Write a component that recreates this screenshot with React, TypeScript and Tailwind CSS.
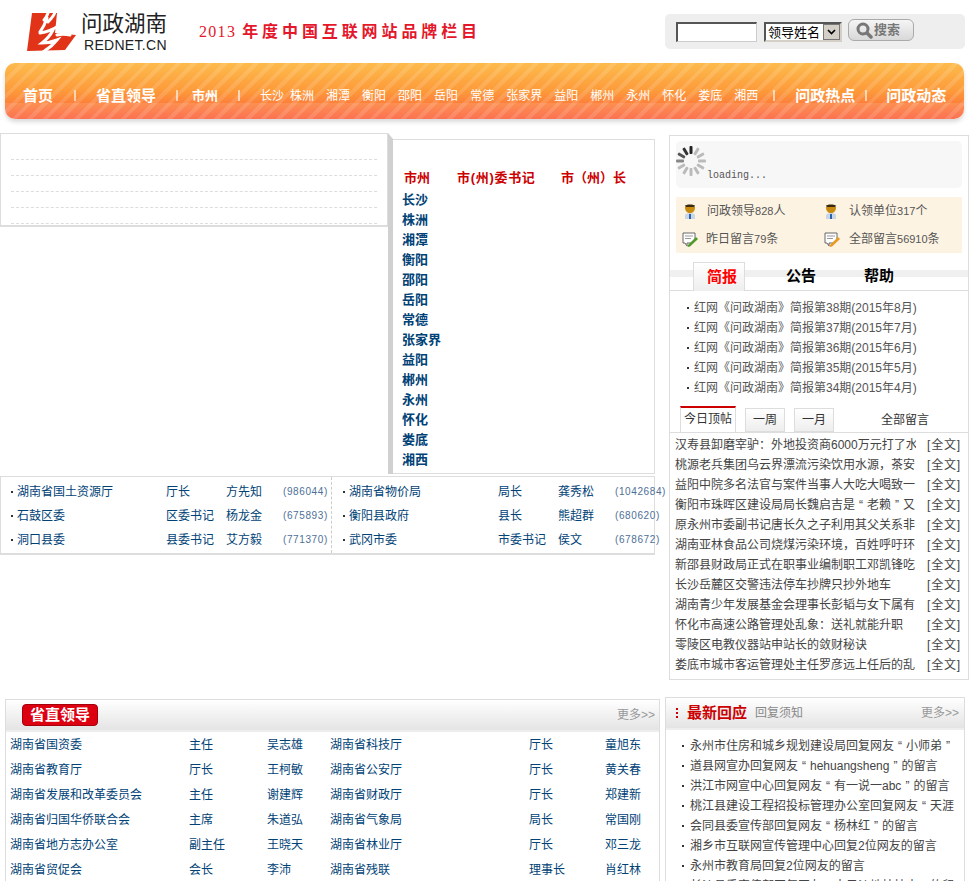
import type { ReactNode } from "react";

const cities = ["长沙", "株洲", "湘潭", "衡阳", "邵阳", "岳阳", "常德", "张家界", "益阳", "郴州", "永州", "怀化", "娄底", "湘西"];

const briefs = [
  "红网《问政湖南》简报第38期(2015年8月)",
  "红网《问政湖南》简报第37期(2015年7月)",
  "红网《问政湖南》简报第36期(2015年6月)",
  "红网《问政湖南》简报第35期(2015年5月)",
  "红网《问政湖南》简报第34期(2015年4月)",
];

const topPosts = [
  "汉寿县卸磨宰驴：外地投资商6000万元打了水",
  "桃源老兵集团乌云界漂流污染饮用水源，茶安",
  "益阳中院多名法官与案件当事人大吃大喝致一",
  "衡阳市珠晖区建设局局长魏启吉是“老赖”又",
  "原永州市委副书记唐长久之子利用其父关系非",
  "湖南亚林食品公司烧煤污染环境，百姓呼吁环",
  "新邵县财政局正式在职事业编制职工邓凯锋吃",
  "长沙岳麓区交警违法停车抄牌只抄外地车",
  "湖南青少年发展基金会理事长彭韬与女下属有",
  "怀化市高速公路管理处乱象：送礼就能升职",
  "零陵区电教仪器站申站长的敛财秘诀",
  "娄底市城市客运管理处主任罗彦远上任后的乱",
];

const leaderRows = [
  ["湖南省国土资源厅", "厅长", "方先知", "(986044)", "湖南省物价局", "局长", "龚秀松", "(1042684)"],
  ["石鼓区委", "区委书记", "杨龙金", "(675893)", "衡阳县政府", "县长", "熊超群", "(680620)"],
  ["洞口县委", "县委书记", "艾方毅", "(771370)", "武冈市委", "市委书记", "侯文", "(678672)"],
];

const provinceRows = [
  ["湖南省国资委", "主任", "吴志雄", "湖南省科技厅", "厅长", "童旭东"],
  ["湖南省教育厅", "厅长", "王柯敏", "湖南省公安厅", "厅长", "黄关春"],
  ["湖南省发展和改革委员会", "主任", "谢建辉", "湖南省财政厅", "厅长", "郑建新"],
  ["湖南省归国华侨联合会", "主席", "朱道弘", "湖南省气象局", "局长", "常国刚"],
  ["湖南省地方志办公室", "副主任", "王晓天", "湖南省林业厅", "厅长", "邓三龙"],
  ["湖南省贸促会", "会长", "李沛", "湖南省残联", "理事长", "肖红林"],
];

const replies = [
  "永州市住房和城乡规划建设局回复网友“小师弟”",
  "道县网宣办回复网友“hehuangsheng”的留言",
  "洪江市网宣中心回复网友“有一说一abc”的留言",
  "桃江县建设工程招投标管理办公室回复网友“天涯",
  "会同县委宣传部回复网友“杨林红”的留言",
  "湘乡市互联网宣传管理中心回复2位网友的留言",
  "永州市教育局回复2位网友的留言",
  "长沙县委宣传部回复网友“大风沙地枯枝木”的留",
];

// curly quotes are narrow in Liberation Sans, the page has them full width
function wideQuotes(text: string): ReactNode[] {
  return text.split(/([“”])/).map((part, i) =>
    part === "“" || part === "”" ? (
      <span key={i} className="inline-block w-[12px] text-center">
        {part}
      </span>
    ) : (
      part
    )
  );
}

function Logo() {
  return (
    <svg width="50" height="40" viewBox="0 0 50 40" className="shrink-0">
      <path d="M5 1H30L28 21L49 23L38 38L0 39Z" fill="#e03318" />
      <path d="M21 1C20 4 19 6 17 8M28 0C27 4 24 7 21 10M20 6C18 12 16 16 13 20M13 21C20 20 27 17 33 13M26 18C23 24 19 28 15 31C20 31 25 30 30 28C26 33 21 37 16 40M30 23C34 22 38 22 43 23" fill="none" stroke="#fff" strokeWidth="3" strokeLinecap="round" />
    </svg>
  );
}

function Person() {
  return (
    <svg width="14" height="16" viewBox="0 0 14 16" className="shrink-0">
      <path d="M2 3C2 1 12 1 12 3L11 4H3Z" fill="#3a2a10" />
      <path d="M2 4H12C12 8 10 10 7 10C4 10 2 8 2 4Z" fill="#c98a10" />
      <path d="M2 16V12C2 11 4 10 7 10C10 10 12 11 12 12V16Z" fill="#c9d6e6" />
      <path d="M6 11H8V16H6Z" fill="#2a62b0" />
    </svg>
  );
}

function NotePencil({ tip }: { tip: string }) {
  return (
    <svg width="16" height="15" viewBox="0 0 16 15" className="shrink-0">
      <path d="M1 1H13V8L9 11H5V14L3 11H1Z" fill="#fff" stroke="#666" />
      <path d="M3 4H11M3 6.500H9" stroke="#999" />
      <path d="M6 13L14 5L16 7L8 14.500L5.500 15Z" fill={tip} />
    </svg>
  );
}

function Spinner() {
  const bars = [0, 30, 60, 90, 120, 150, 180, 210, 240, 270, 300, 330];
  const colors = ["#222", "#bbb", "#bbb", "#bbb", "#bbb", "#bbb", "#bbb", "#bbb", "#bbb", "#888", "#555", "#333"];
  return (
    <svg width="32" height="32" viewBox="0 0 32 32" className="shrink-0 -ml-[1px]">
      {bars.map((deg, i) => (
        <rect key={deg} x="14.500" y="1" width="3" height="8" rx="1" fill={colors[i]} transform={`rotate(${deg} 16 16)`} />
      ))}
    </svg>
  );
}

function Dot() {
  return <span className="w-[2px] h-[2px] bg-[#333] shrink-0" />;
}

export default function App() {
  return (
    <div className="w-[969px] h-[881px] overflow-hidden bg-white text-xs font-['Liberation_Sans','Noto_Sans_CJK_SC',sans-serif]">
      {/* header */}
      <div className="h-[63px] flex items-start">
        <div className="ml-[27px] mt-[12px] w-[140px] flex gap-[4px]">
          <Logo />
          <div className="text-[#222]">
            <div className="text-[21.500px] leading-[24px] whitespace-nowrap">问政湖南</div>
            <div className="text-[14px] leading-[16px] tracking-[0.3px] mt-[1px] ml-[3px]">REDNET.CN</div>
          </div>
        </div>
        <div className="ml-[32px] mt-[22px] text-[#e4172b] text-[16px] leading-[20px] font-bold tracking-[3.900px] whitespace-nowrap font-['Liberation_Serif','Noto_Sans_CJK_SC',serif]">
          <span className="font-normal tracking-[1.300px] mr-[6px]">2013</span>
          年度中国互联网站品牌栏目
        </div>
        <div className="ml-auto mr-[4px] mt-[14px] w-[300px] h-[35px] bg-[#eeeeee] rounded-[5px] flex items-start pl-[11px]">
          <input className="mt-[8px] w-[81px] h-[20px] bg-white border border-t-2 border-l-2 border-t-[#555] border-l-[#555] border-r-[#ccc] border-b-[#ccc]" />
          <div className="mt-[8px] ml-[7px] w-[78px] h-[20px] flex bg-white border-2 border-t-[#555] border-l-[#555] border-r-[#d4d0c8] border-b-[#d4d0c8]">
            <span className="flex-1 text-[13px] leading-[17px] pl-[2px] text-black whitespace-nowrap">领导姓名</span>
            <span className="w-[17px] bg-[#d4d0c8] border border-[#777] flex items-center justify-center">
              <svg width="9" height="6" viewBox="0 0 9 6"><path d="M1 1L4.500 4.500L8 1" fill="none" stroke="#000" strokeWidth="1.600" /></svg>
            </span>
          </div>
          <div className="mt-[5px] ml-[6px] w-[66px] h-[22px] rounded-[6px] border border-[#aaa] bg-gradient-to-b from-[#f5f5f5] to-[#d8d8d8] flex items-center pl-[7px] gap-[1px] text-[#777] text-[13px] font-bold">
            <svg width="17" height="17" viewBox="0 0 17 17" className="shrink-0">
              <circle cx="7" cy="7" r="5" fill="none" stroke="#777" strokeWidth="3" />
              <path d="M11 11L15 15" stroke="#777" strokeWidth="3.500" strokeLinecap="round" />
            </svg>
            搜索
          </div>
        </div>
      </div>

      {/* nav */}
      <div className="mx-[5px] h-[56px] rounded-[10px] shadow-[0_3px_4px_rgba(0,0,0,0.15)] text-white flex items-center pt-[9px] pl-[18px] whitespace-nowrap [background-image:linear-gradient(transparent_71%,rgba(255,255,255,0.12)_71%),repeating-linear-gradient(135deg,rgba(255,255,255,0.13)_0,rgba(255,255,255,0.13)_4px,transparent_4px,transparent_11px),linear-gradient(#fdbb4c,#fd9a3a_50%,#fc5f3a)]">
        <span className="text-[15px] font-bold w-[30px]">首页</span>
        <span className="ml-[21px] w-[2px] h-[11px] bg-white/60" />
        <span className="ml-[20px] text-[15px] font-bold">省直领导</span>
        <span className="ml-[20px] w-[2px] h-[11px] bg-white/60" />
        <span className="ml-[14px] text-[13px] font-bold">市州</span>
        <span className="ml-[20px] w-[2px] h-[11px] bg-white/60" />
        <div className="ml-[20px] flex gap-[12px] text-xs">
          {cities.map((city, i) => (
            <span key={city} className={i === 1 ? "-ml-[6px]" : ""}>{city}</span>
          ))}
        </div>
        <span className="ml-[15px] w-[2px] h-[11px] bg-white/60" />
        <span className="ml-[20px] text-[15px] font-bold">问政热点</span>
        <span className="ml-[10px] w-[2px] h-[11px] bg-white/60" />
        <span className="ml-[19px] text-[15px] font-bold">问政动态</span>
      </div>

      {/* main */}
      <div className="flex mt-[14px] items-start">
        <div className="w-[655px] shrink-0">
          <div className="flex items-start h-[343px]">
            <div className="w-[388px] h-[94px] border border-[#dddddd] border-b-2 px-[10px] pt-[25px] flex flex-col gap-[15px] shrink-0">
              {[0, 1, 2, 3, 4].map((i) => (
                <div key={i} className="border-t border-dashed border-[#dddddd]" />
              ))}
            </div>
            <div className="w-[5px] h-[341px] bg-[#d0d0d0] shrink-0 [clip-path:polygon(0_0,100%_6px,100%_100%,0_100%)]" />
            <div className="mt-[6px] flex-1 h-[335px] border border-[#dddddd] border-l-0 pl-[9px] pt-[29px]">
              <div className="flex text-[13px] leading-[18px] font-bold text-[#cc0000] pl-[2px]">
                <span className="w-[53px]">市州</span>
                <span className="w-[104px] tracking-[0.7px]">市(州)委书记</span>
                <span>市（州）长</span>
              </div>
              <div className="mt-[3px] text-[13px] leading-[20px] font-bold text-[#004276]">
                {cities.map((city) => (
                  <div key={city}>{city}</div>
                ))}
              </div>
            </div>
          </div>
          <div className="h-[79px] border border-[#dddddd] border-b-2 flex">
            {[0, 1].map((col) => (
              <div key={col} className={col === 0 ? "w-[331px] shrink-0 border-r border-dashed border-[#cccccc] pl-[10px] pt-[3px]" : "flex-1 pl-[11px] pt-[3px]"}>
                {leaderRows.map((row) => {
                  const [org, title, name, count] = col === 0 ? row.slice(0, 4) : row.slice(4);
                  return (
                    <div key={org} className="h-[24px] flex items-center text-[#004276] whitespace-nowrap">
                      <Dot />
                      <span className="ml-[4px] w-[149px]">{org}</span>
                      <span className="w-[60px]">{title}</span>
                      <span className="w-[57px]">{name}</span>
                      <span className="text-[10px] tracking-[0.6px] text-[#4d7098]">{count}</span>
                    </div>
                  );
                })}
              </div>
            ))}
          </div>
        </div>

        <div className="ml-[14px] mt-[2px] w-[300px] h-[545px] border border-[#dddddd] shrink-0 text-[#444]">
          <div className="mx-[6px] mt-[5px] h-[47px] bg-[#f7f7f7] rounded-[5px] flex items-start pt-[4px] text-[10px] font-['Liberation_Mono','Noto_Sans_CJK_SC',monospace] text-[#555]">
            <Spinner />
            <span className="mt-[24px]">loading...</span>
          </div>
          <div className="mx-[6px] mt-[9px] h-[56px] bg-[#fdf3e3] grid grid-cols-[142px_1fr] grid-rows-2 text-[#555]">
            <div className="flex items-center pl-[7px] gap-[10px]"><Person /><span>问政领导<span className="text-[11px]">828</span>人</span></div>
            <div className="flex items-center pl-[6px] gap-[11px]"><Person /><span>认领单位<span className="text-[11px]">317</span>个</span></div>
            <div className="flex items-center pl-[6px] gap-[8px]"><NotePencil tip="#4f9a2a" /><span>昨日留言<span className="text-[11px]">79</span>条</span></div>
            <div className="flex items-center pl-[6px] gap-[9px]"><NotePencil tip="#e89a20" /><span>全部留言<span className="text-[11px]">56910</span>条</span></div>
          </div>

          <div className="mt-[9px] h-[29px] border-b border-[#dddddd] flex items-stretch pl-[23px] text-[15px] leading-[28px] font-bold text-black bg-[linear-gradient(transparent_30%,#f0f0f0_30%,#f0f0f0_55%,transparent_55%)]">
            <span className="w-[52px] h-[29px] border border-[#dddddd] border-b-0 bg-gradient-to-b from-white to-[#eeeeee] text-center pl-[6px] text-[#ff0000]">简报</span>
            <span className="ml-[41px]">公告</span>
            <span className="ml-[48px]">帮助</span>
          </div>
          <div className="mt-[7px] pl-[17px] text-[#555]">
            {briefs.map((brief) => (
              <div key={brief} className="h-[20px] flex items-center gap-[5px] whitespace-nowrap">
                <Dot />
                {brief}
              </div>
            ))}
          </div>

          <div className="mt-[9px] h-[26px] border-b border-[#dddddd] flex items-end pl-[10px] text-[#333]">
            <span className="w-[56px] h-[26px] border-x border-[#dddddd] border-t-2 border-t-[#cc0000] text-center leading-[22px] bg-white">今日顶帖</span>
            <span className="ml-[9px] w-[40px] h-[24px] border border-[#dddddd] bg-gradient-to-b from-white to-[#eeeeee] text-center leading-[22px]">一周</span>
            <span className="ml-[9px] w-[40px] h-[24px] border border-[#dddddd] bg-gradient-to-b from-white to-[#eeeeee] text-center leading-[22px]">一月</span>
            <span className="ml-[47px] w-[50px] leading-[24px]">全部留言</span>
          </div>
          <div className="mt-[2px] pl-[5px]">
            {topPosts.map((post) => (
              <div key={post} className="h-[20px] flex items-center whitespace-nowrap">
                <span className="w-[241px] overflow-hidden">{wideQuotes(post)}</span>
                <span className="ml-[11px] tracking-[0.8px]">[全文]</span>
              </div>
            ))}
          </div>
        </div>
      </div>

      {/* bottom */}
      <div className="flex items-start">
        <div className="ml-[5px] mt-[19px] w-[655px] h-[300px] border border-[#dddddd] shrink-0">
          <div className="h-[32px] border-b-2 border-[#eeeeee] bg-gradient-to-b from-white to-[#e4e4e4] flex items-center pl-[16px] pr-[4px]">
            <span className="w-[76px] h-[22px] text-center rounded-[4px] bg-[#dd0011] border border-[#a5000c] text-white text-[15px] leading-[20px] font-bold">省直领导</span>
            <span className="ml-auto text-[#999]">更多&gt;&gt;</span>
          </div>
          <div className="pl-[4px] text-[#004276]">
            {provinceRows.map((row) => (
              <div key={row[0]} className="h-[25px] flex items-center whitespace-nowrap">
                <span className="w-[179px]">{row[0]}</span>
                <span className="w-[78px]">{row[1]}</span>
                <span className="w-[63px]">{row[2]}</span>
                <span className="w-[199px]">{row[3]}</span>
                <span className="w-[76px]">{row[4]}</span>
                <span>{row[5]}</span>
              </div>
            ))}
          </div>
        </div>
        <div className="ml-[5px] mt-[17px] w-[300px] h-[300px] border border-[#dddddd] shrink-0">
          <div className="h-[32px] border-b-2 border-[#eeeeee] bg-gradient-to-b from-white to-[#e4e4e4] flex items-center pl-[10px] pr-[5px]">
            <span className="w-[2px] h-[10px] border-l-2 border-dotted border-[#cc0000]" />
            <span className="ml-[9px] text-[15px] font-bold text-[#cc0000]">最新回应</span>
            <span className="ml-[8px] text-[#888]">回复须知</span>
            <span className="ml-auto text-[#999]">更多&gt;&gt;</span>
          </div>
          <div className="pl-[16px] pt-[6px] text-[#444]">
            {replies.map((reply) => (
              <div key={reply} className="h-[20px] flex items-center gap-[6px] whitespace-nowrap overflow-hidden">
                <Dot />
                <span>{wideQuotes(reply)}</span>
              </div>
            ))}
          </div>
        </div>
      </div>
    </div>
  );
}
